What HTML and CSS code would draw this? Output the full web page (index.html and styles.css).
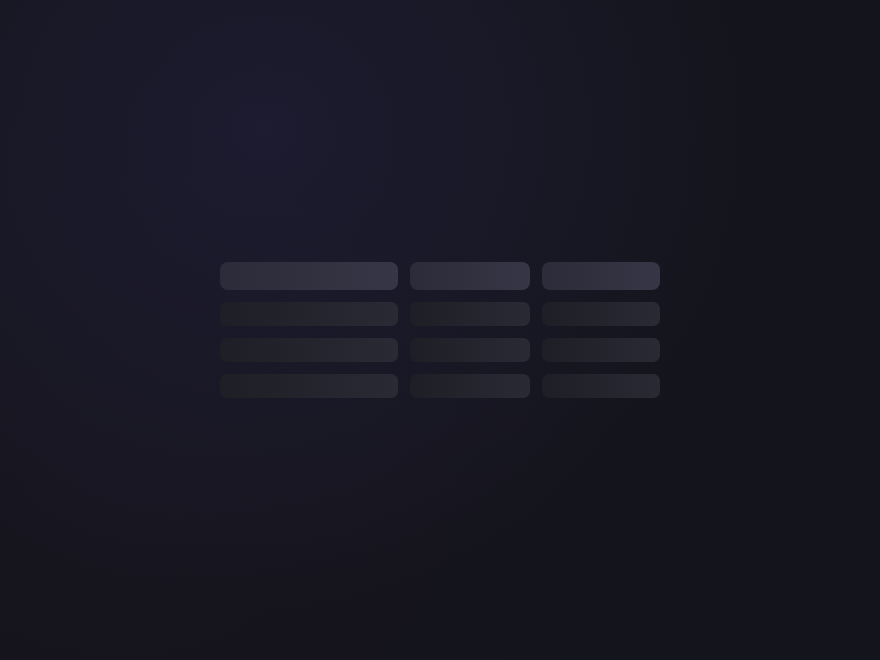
FILE: index.html
```html
<!DOCTYPE html>
<html lang="en">
<head>
<meta charset="utf-8">
<title>Loading</title>
<link rel="stylesheet" href="styles.css">
</head>
<body>
<main class="stage">
  <div class="skeleton-table" aria-busy="true" aria-label="Loading table">
    <div class="cell head"></div>
    <div class="cell head"></div>
    <div class="cell head"></div>
    <div class="cell"></div>
    <div class="cell"></div>
    <div class="cell"></div>
    <div class="cell"></div>
    <div class="cell"></div>
    <div class="cell"></div>
    <div class="cell"></div>
    <div class="cell"></div>
    <div class="cell"></div>
  </div>
</main>
</body>
</html>
```

FILE: styles.css
```css
html, body {
  margin: 0;
  padding: 0;
  height: 100%;
}
body {
  font-family: "Inter", "Liberation Sans", sans-serif;
  background-color: #14141c;
  background-image:
    radial-gradient(ellipse 520px 480px at 265px 130px, rgba(36, 34, 64, 0.55), rgba(36, 34, 64, 0) 100%),
    radial-gradient(ellipse 500px 400px at 120px 480px, rgba(30, 24, 38, 0.3), rgba(30, 24, 38, 0) 100%);
}
.stage {
  height: 660px;
  display: flex;
  align-items: center;
  justify-content: center;
}
.skeleton-table {
  display: grid;
  grid-template-columns: 178px 120px 118px;
  grid-auto-rows: 24px;
  grid-template-rows: 28px;
  gap: 12px;
}
.cell {
  border-radius: 7px;
  background: linear-gradient(90deg, #1e1e26, #2a2a35);
}
.cell.head {
  border-radius: 8px;
  background: linear-gradient(90deg, #2c2b39, #373646);
}
```
